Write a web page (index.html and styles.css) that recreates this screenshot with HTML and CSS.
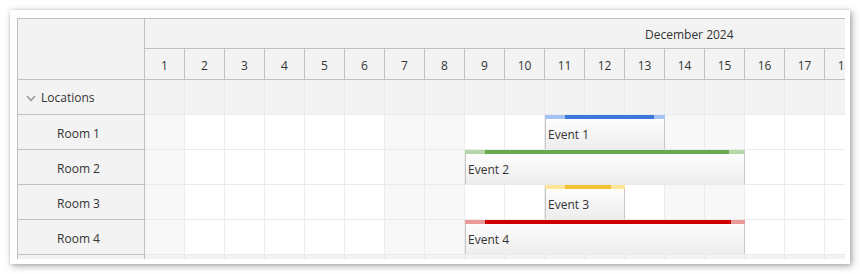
FILE: index.html
```html
<!DOCTYPE html>
<html>
<head>
<meta charset="utf-8">
<link rel="stylesheet" href="styles.css">
</head>
<body>
<div class="card">
  <div class="scheduler">
    <div class="corner"></div>
    <div class="timeheader">
      <div class="month"><span class="month-text">December 2024</span></div>
      <div class="days">
        <div class="day">1</div><div class="day">2</div><div class="day">3</div><div class="day">4</div><div class="day">5</div><div class="day">6</div><div class="day">7</div><div class="day">8</div><div class="day">9</div><div class="day">10</div><div class="day">11</div><div class="day">12</div><div class="day">13</div><div class="day">14</div><div class="day">15</div><div class="day">16</div><div class="day">17</div><div class="day">18</div>
      </div>
    </div>

    <div class="rh group"><svg class="chev" width="10" height="7" viewBox="0 0 10 7"><polyline points="1,1 5,5.5 9,1" fill="none" stroke="#9a9a9a" stroke-width="1.6"/></svg><span>Locations</span></div>
    <div class="tl group-row">
      <div class="c"></div><div class="c"></div><div class="c"></div><div class="c"></div><div class="c"></div><div class="c"></div><div class="c"></div><div class="c"></div><div class="c"></div><div class="c"></div><div class="c"></div><div class="c"></div><div class="c"></div><div class="c"></div><div class="c"></div><div class="c"></div><div class="c"></div><div class="c"></div>
    </div>

    <div class="rh room">Room 1</div>
    <div class="tl">
      <div class="c we"></div><div class="c"></div><div class="c"></div><div class="c"></div><div class="c"></div><div class="c"></div><div class="c we"></div><div class="c we"></div><div class="c"></div><div class="c"></div><div class="c"></div><div class="c"></div><div class="c"></div><div class="c we"></div><div class="c we"></div><div class="c"></div><div class="c"></div><div class="c"></div>
      <div class="event blue" style="left:400px;width:120px"><div class="bar"><div class="bar-fill" style="left:20px;width:89px"></div></div><div class="body">Event 1</div></div>
    </div>

    <div class="rh room">Room 2</div>
    <div class="tl">
      <div class="c we"></div><div class="c"></div><div class="c"></div><div class="c"></div><div class="c"></div><div class="c"></div><div class="c we"></div><div class="c we"></div><div class="c"></div><div class="c"></div><div class="c"></div><div class="c"></div><div class="c"></div><div class="c we"></div><div class="c we"></div><div class="c"></div><div class="c"></div><div class="c"></div>
      <div class="event green" style="left:320px;width:280px"><div class="bar"><div class="bar-fill" style="left:20px;width:244px"></div></div><div class="body">Event 2</div></div>
    </div>

    <div class="rh room">Room 3</div>
    <div class="tl">
      <div class="c we"></div><div class="c"></div><div class="c"></div><div class="c"></div><div class="c"></div><div class="c"></div><div class="c we"></div><div class="c we"></div><div class="c"></div><div class="c"></div><div class="c"></div><div class="c"></div><div class="c"></div><div class="c we"></div><div class="c we"></div><div class="c"></div><div class="c"></div><div class="c"></div>
      <div class="event yellow" style="left:400px;width:80px"><div class="bar"><div class="bar-fill" style="left:20px;width:46px"></div></div><div class="body">Event 3</div></div>
    </div>

    <div class="rh room">Room 4</div>
    <div class="tl">
      <div class="c we"></div><div class="c"></div><div class="c"></div><div class="c"></div><div class="c"></div><div class="c"></div><div class="c we"></div><div class="c we"></div><div class="c"></div><div class="c"></div><div class="c"></div><div class="c"></div><div class="c"></div><div class="c we"></div><div class="c we"></div><div class="c"></div><div class="c"></div><div class="c"></div>
      <div class="event red" style="left:320px;width:280px"><div class="bar"><div class="bar-fill" style="left:20px;width:246px"></div></div><div class="body">Event 4</div></div>
    </div>

    <div class="rh group"></div>
    <div class="tl group-row">
      <div class="c"></div><div class="c"></div><div class="c"></div><div class="c"></div><div class="c"></div><div class="c"></div><div class="c"></div><div class="c"></div><div class="c"></div><div class="c"></div><div class="c"></div><div class="c"></div><div class="c"></div><div class="c"></div><div class="c"></div><div class="c"></div><div class="c"></div><div class="c"></div>
    </div>
  </div>
</div>
</body>
</html>
```

FILE: styles.css
```css
* { box-sizing: border-box; }
html, body { margin: 0; padding: 0; background: #fff; }
body {
  font-family: "Open Sans", "Noto Sans", sans-serif;
  font-size: 12px;
  color: #333;
}
.card {
  margin: 10px;
  width: 840px;
  height: 254px;
  padding: 8px 5px 5px 7px;
  background: #fff;
  box-shadow: 2px 2px 7px rgba(0,0,0,0.35), 0 0 3px rgba(0,0,0,0.12);
}
.scheduler {
  display: grid;
  grid-template-columns: 127px 700px;
  grid-auto-rows: 35px;
  grid-template-rows: 61px;
  height: 241px;
  overflow: hidden;
  border-top: 1px solid #c0c0c0;
  border-left: 1px solid #c0c0c0;
  width: 828px;
}
.corner {
  background: #f3f3f3;
  border-right: 1px solid #c0c0c0;
  border-bottom: 1px solid #c0c0c0;
  height: 61px;
}
.timeheader {
  display: flex;
  flex-direction: column;
  overflow: hidden;
  background: #f3f3f3;
}
.month {
  height: 30px;
  border-bottom: 1px solid #c0c0c0;
  padding-left: 500px;
  display: flex;
  align-items: center;
  white-space: nowrap;
}
.month-text { padding-top: 1px; }
.days {
  display: flex;
  height: 31px;
  border-bottom: 1px solid #c0c0c0;
}
.day {
  flex: 0 0 40px;
  border-right: 1px solid #c0c0c0;
  display: flex;
  align-items: center;
  justify-content: center;
  padding-top: 2px;
}
.rh {
  background: #f3f3f3;
  border-right: 1px solid #c0c0c0;
  border-bottom: 1px solid #c0c0c0;
  display: flex;
  align-items: center;
}
.rh.group {
  padding-left: 8px;
  gap: 5px;
  padding-top: 1px;
}
.chev { display: block; margin-top: 1px; }
.rh.room {
  justify-content: center;
  padding-right: 5px;
  padding-top: 2px;
}
.tl {
  position: relative;
  display: flex;
  overflow: hidden;
  border-bottom: 1px solid #eaeaea;
  background: #fff;
}
.c {
  flex: 0 0 40px;
  border-right: 1px solid #ececec;
}
.c.we { background: #f8f8f8; }
.group-row { background: #f3f3f3; border-bottom-color: #eaeaea; }
.group-row .c { border-right-color: #e9e9e9; }

.event {
  position: absolute;
  top: 0;
  height: 35px;
  display: flex;
  flex-direction: column;
}
.bar {
  position: relative;
  height: 4px;
  flex: 0 0 4px;
}
.bar-fill {
  position: absolute;
  top: 0;
  height: 4px;
}
.body {
  flex: 1;
  border: 1px solid #c6c6c6;
  border-top: none;
  background: linear-gradient(#fdfdfd, #ededed);
  display: flex;
  align-items: center;
  padding-left: 2px;
  padding-top: 1px;
  white-space: nowrap;
}
.blue .bar { background: #a4c2f4; }
.blue .bar-fill { background: #3c78d8; }
.green .bar { background: #b6d7a8; }
.green .bar-fill { background: #6aa84f; }
.yellow .bar { background: #ffe599; }
.yellow .bar-fill { background: #f1c232; }
.red .bar { background: #ea9999; }
.red .bar-fill { background: #cc0000; }
```
